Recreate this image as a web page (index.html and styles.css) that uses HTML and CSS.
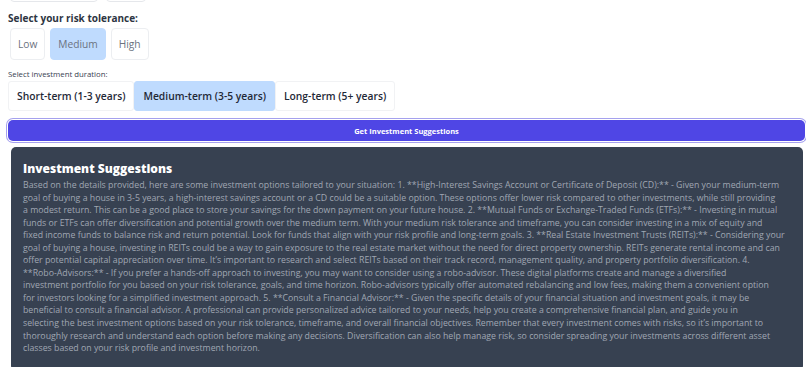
FILE: index.html
```html
<!DOCTYPE html>
<html>
<head>
<meta charset="utf-8">
<link rel="stylesheet" href="styles.css">
</head>
<body>
<div class="page">
  <div class="prev-row">
    <div class="prev-box prev-a"></div>
    <div class="prev-box prev-b"></div>
  </div>
  <div class="label-lg">Select your risk tolerance:</div>
  <div class="risk-row">
    <button class="risk-btn">Low</button>
    <button class="risk-btn active">Medium</button>
    <button class="risk-btn">High</button>
  </div>
  <div class="label-sm">Select investment duration:</div>
  <div class="dur-row">
    <button class="dur-btn">Short-term (1-3 years)</button>
    <button class="dur-btn active">Medium-term (3-5 years)</button>
    <button class="dur-btn">Long-term (5+ years)</button>
  </div>
  <button class="submit">Get Investment Suggestions</button>
  <div class="card">
    <h2 class="card-title">Investment Suggestions</h2>
    <p class="card-text">Based on the details provided, here are some investment options tailored to your situation: 1. **High-Interest Savings Account or Certificate of Deposit (CD):** - Given your medium-term<br>goal of buying a house in 3-5 years, a high-interest savings account or a CD could be a suitable option. These options offer lower risk compared to other investments, while still providing<br>a modest return. This can be a good place to store your savings for the down payment on your future house. 2. **Mutual Funds or Exchange-Traded Funds (ETFs):** - Investing in mutual<br>funds or ETFs can offer diversification and potential growth over the medium term. With your medium risk tolerance and timeframe, you can consider investing in a mix of equity and<br>fixed income funds to balance risk and return potential. Look for funds that align with your risk profile and long-term goals. 3. **Real Estate Investment Trusts (REITs):** - Considering your<br>goal of buying a house, investing in REITs could be a way to gain exposure to the real estate market without the need for direct property ownership. REITs generate rental income and can<br>offer potential capital appreciation over time. It’s important to research and select REITs based on their track record, management quality, and property portfolio diversification. 4.<br>**Robo-Advisors:** - If you prefer a hands-off approach to investing, you may want to consider using a robo-advisor. These digital platforms create and manage a diversified<br>investment portfolio for you based on your risk tolerance, goals, and time horizon. Robo-advisors typically offer automated rebalancing and low fees, making them a convenient option<br>for investors looking for a simplified investment approach. 5. **Consult a Financial Advisor:** - Given the specific details of your financial situation and investment goals, it may be<br>beneficial to consult a financial advisor. A professional can provide personalized advice tailored to your needs, help you create a comprehensive financial plan, and guide you in<br>selecting the best investment options based on your risk tolerance, timeframe, and overall financial objectives. Remember that every investment comes with risks, so it’s important to<br>thoroughly research and understand each option before making any decisions. Diversification can also help manage risk, so consider spreading your investments across different asset<br>classes based on your risk profile and investment horizon.</p>
  </div>
</div>
</body>
</html>
```

FILE: styles.css
```css
* { box-sizing: border-box; }
html, body { margin: 0; padding: 0; background: #ffffff; overflow: hidden; }
body {
  font-family: "Open Sans", "Noto Sans", sans-serif;
  color: #374151;
}
.page {
  padding: 0 0 0 8px;
  display: flex;
  flex-direction: column;
  align-items: flex-start;
}
.prev-row {
  display: flex;
  gap: 8px;
  margin-top: -30px;
  margin-left: 2px;
}
.prev-box {
  height: 32px;
  border: 1px solid #e5e7eb;
  border-radius: 4px;
  background: #fff;
}
.prev-a { width: 88px; }
.prev-b { width: 40px; }
.label-lg {
  margin-top: 8px;
  font-size: 10px;
  font-weight: 700;
  line-height: 16px;
  color: #2d3542;
}
.risk-row {
  display: flex;
  gap: 5px;
  margin-top: 2px;
  margin-left: 2px;
}
button {
  font-family: inherit;
  cursor: pointer;
}
.risk-btn {
  height: 32px;
  padding: 0 7px;
  border: 1px solid #eceef1;
  border-radius: 4px;
  background: #ffffff;
  color: #6b7280;
  font-size: 10.2px;
  font-weight: 400;
}
.risk-btn.active { background: #bfdbfe; border-color: #bfdbfe; }
.label-sm {
  margin-top: 9px;
  font-size: 7.8px;
  line-height: 11px;
  color: #374151;
}
.dur-row {
  display: flex;
  margin-top: 1px;
}
.dur-btn {
  height: 30px;
  padding: 0 8px;
  border: 1px solid #f1f2f4;
  border-radius: 3px;
  background: #ffffff;
  color: #1f2937;
  font-size: 10.3px;
  font-weight: 600;
}
.dur-btn.active { background: #bfdbfe; border-color: #bfdbfe; }
.submit {
  margin-top: 9px;
  width: 797px;
  height: 21px;
  border: none;
  border-radius: 5px;
  background: #4f46e5;
  color: #ffffff;
  font-size: 7.5px;
  font-weight: 700;
  box-shadow: 0 0 0 1px #ffffff, 0 0 0 2px #a5a1ee;
}
.card {
  margin-top: 6px;
  margin-left: 3px;
  width: 792px;
  background: #374151;
  border-radius: 5px;
  padding: 12px 12px 16px 12px;
}
.card-title {
  margin: 0;
  font-size: 12px;
  font-weight: 800;
  line-height: 20px;
  color: #ffffff;
}
.card-text {
  margin: 0;
  font-size: 8.78px;
  line-height: 12.55px;
  color: #a0a7b3;
}
```
